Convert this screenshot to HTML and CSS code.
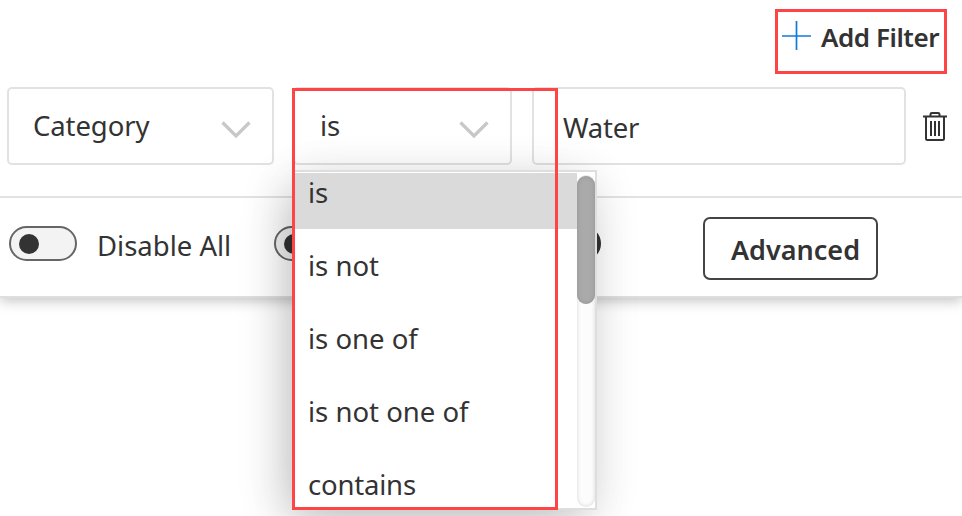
FILE: index.html
```
<!DOCTYPE html>
<html lang="en">
<head>
<meta charset="utf-8">
<title>Filters</title>
<link rel="stylesheet" href="styles.css">
</head>
<body>
<main class="panel">
  <header class="toolbar">
    <button class="add">
      <svg width="30" height="30" viewBox="0 0 30 30"><path d="M15.500 0v29M1 15h29" stroke="#0f7bd8" stroke-width="1.7"/></svg>
      <span class="add-label">Add Filter</span>
    </button>
  </header>
  <section class="filter">
    <div class="field category"><span class="category-label">Category</span>
      <svg class="chevron" width="30" height="19" viewBox="0 0 30 19"><path d="M1.5 1.5 15 15 28.500 1.500" fill="none" stroke="#c8c8c8" stroke-width="3.300"/></svg>
    </div>
    <div class="field operator"><span>is</span>
      <svg class="chevron" width="30" height="19" viewBox="0 0 30 19"><path d="M1.5 1.5 15 15 28.500 1.500" fill="none" stroke="#c8c8c8" stroke-width="3.300"/></svg>
    </div>
    <div class="field value"><span class="value-label">Water</span></div>
    <svg class="trash" width="24" height="30" viewBox="0 0 24 30" fill="none" stroke="#333" stroke-width="2"><path d="M0 4.500h24M7.500 4V2.200Q7.500 1 9 1h6q1.500 0 1.500 1.200V4M3 5v21.500q0 1.500 1.500 1.500h15q1.500 0 1.500-1.500V5M8 9v15M12 9v15M16 9v15"/></svg>
  </section>
  <footer class="actions">
    <span class="toggle"></span>
    <span class="disable">Disable All</span>
    <span class="toggle middle"></span>
    <span class="toggle end on"></span>
    <button class="advanced"><span>Advanced</span></button>
  </footer>
</main>
<div class="menu">
  <ul class="options">
    <li class="selected"><span>is</span></li>
    <li><span>is not</span></li>
    <li><span>is one of</span></li>
    <li><span class="long">is not one of</span></li>
    <li><span class="contains">contains</span></li>
  </ul>
  <div class="track"><div class="thumb"></div></div>
</div>
<div class="mark mark-add"></div>
<div class="mark mark-menu"></div>
</body>
</html>
```
FILE: styles.css
```
* { box-sizing: border-box; }
body {
  margin: 0;
  height: 516px;
  position: relative;
  overflow: hidden;
  background: #fff;
  color: #333;
  font: 27.5px/38px "Noto Sans", "Open Sans", sans-serif;
}
button { font: inherit; color: inherit; background: none; border: 0; padding: 0; }
svg { display: block; flex: none; }
.panel {
  height: 298px;
  background: #fff;
  border-bottom: 2px solid #dedede;
  box-shadow: 0 3px 12px rgba(0, 0, 0, .24);
}
.toolbar { height: 87px; padding: 18px 23px 0 0; display: flex; justify-content: flex-end; }
.add { display: flex; gap: 10px; height: 38px; width: 158px; font-weight: 600; font-size: 26px; white-space: nowrap; }
.add svg { margin-top: 3px; }
.add-label { letter-spacing: -.45px; }
.filter { display: flex; height: 109px; padding-left: 7px; }
.field {
  height: 78px;
  border: 2px solid #e2e2e2;
  border-radius: 5px;
  display: flex;
  justify-content: space-between;
  padding: 18px 21px 0 24px;
}
.category { width: 267px; }
.category-label { letter-spacing: -.1px; }
.operator { width: 219px; margin-left: 19px; padding-left: 25px; }
.value { width: 374px; margin-left: 20px; padding: 20px 0 0 29px; }
.value-label { letter-spacing: -.2px; }
.chevron { margin-top: 14px; }
.trash { margin: 25px 0 0 17px; }
.actions { height: 100px; display: flex; border-top: 2px solid #e2e2e2; padding-left: 9px; }
.toggle {
  flex: none;
  width: 68px;
  height: 35px;
  margin-top: 28px;
  border: 2px solid #666;
  border-radius: 18px;
  background: #f3f3f3;
  padding: 6px 7px 0 8px;
}
.toggle::before { content: ""; display: block; width: 20px; height: 20px; border-radius: 50%; background: #333; }
.disable { width: 158px; margin: 29px 0 0 20px; white-space: nowrap; }
.middle { margin-left: 19px; }
.end { margin-left: 191px; background: #333; border-color: #333; }
.advanced {
  width: 175px;
  height: 63px;
  margin: 19px 0 0 102px;
  border: 2px solid #444;
  border-radius: 7px;
  padding: 2px 0 0 10px;
  font-weight: 600;
  font-size: 27px;
}
.menu {
  position: absolute;
  left: 293px;
  top: 170px;
  width: 304px;
  height: 340px;
  display: flex;
  background: #fff;
  border: 2px solid #dedede;
  box-shadow: -10px 14px 46px -6px rgba(0, 0, 0, .24), 0 8px 50px rgba(0, 0, 0, .07);
}
.options { list-style: none; margin: 1px 0 0; padding: 0; width: 282px; }
.options li { height: 73px; padding-left: 13px; display: flex; align-items: center; }
.options .selected { height: 56px; background: #dadada; align-items: flex-start; padding-top: 1px; }
.contains { letter-spacing: -.2px; }
.track { width: 18px; margin: 3px 0 1px; border-radius: 9px; background: #fcfcfc; box-shadow: inset 0 0 4px #d5d5d5; }
.thumb { height: 128px; margin-top: 1px; border-radius: 9px; background: #aaa; box-shadow: inset 0 0 5px #959595; }
.mark { position: absolute; border: 3px solid #fe4545; }
.mark-add { left: 775px; top: 9px; width: 172px; height: 65px; }
.mark-menu { left: 292px; top: 88px; width: 266px; height: 422px; }
```
